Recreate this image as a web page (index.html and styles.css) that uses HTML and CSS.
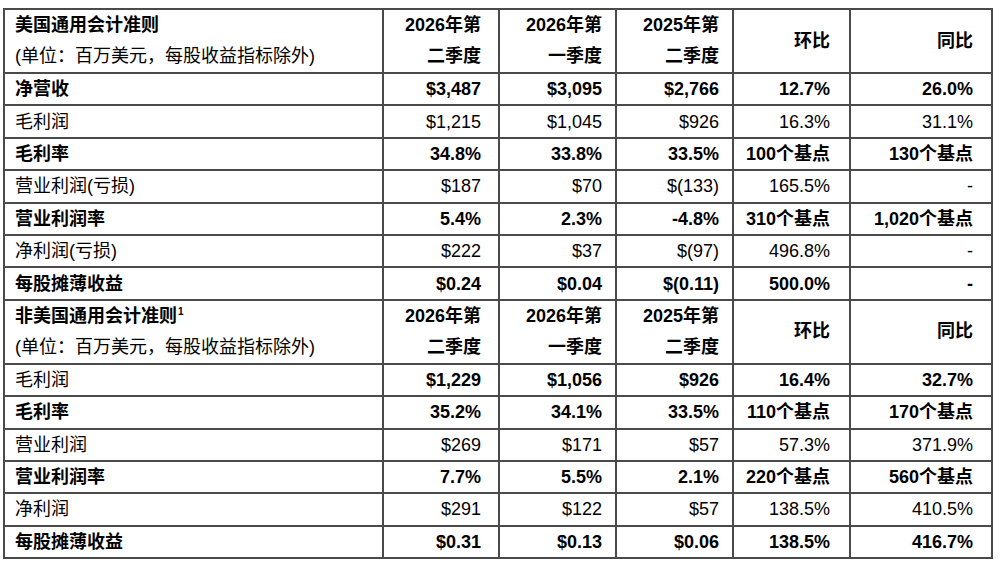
FILE: index.html
```html
<!DOCTYPE html>
<html lang="zh-CN">
<head>
<meta charset="utf-8">
<link rel="stylesheet" href="styles.css">
</head>
<body>
<table class="fin">
  <colgroup>
    <col class="c1"><col class="c2"><col class="c3"><col class="c4"><col class="c5"><col class="c6">
  </colgroup>
  <tbody>
    <tr class="head">
      <td class="label"><div class="b">美国通用会计准则</div><div>(单位：百万美元，每股收益指标除外)</div></td>
      <td class="b">2026年第<br>二季度</td>
      <td class="b">2026年第<br>一季度</td>
      <td class="b">2025年第<br>二季度</td>
      <td class="b">环比</td>
      <td class="b">同比</td>
    </tr>
    <tr class="bold"><td class="label">净营收</td><td>$3,487</td><td>$3,095</td><td>$2,766</td><td>12.7%</td><td>26.0%</td></tr>
    <tr><td class="label">毛利润</td><td>$1,215</td><td>$1,045</td><td>$926</td><td>16.3%</td><td>31.1%</td></tr>
    <tr class="bold"><td class="label">毛利率</td><td>34.8%</td><td>33.8%</td><td>33.5%</td><td>100个基点</td><td>130个基点</td></tr>
    <tr><td class="label">营业利润(亏损)</td><td>$187</td><td>$70</td><td>$(133)</td><td>165.5%</td><td>-</td></tr>
    <tr class="bold"><td class="label">营业利润率</td><td>5.4%</td><td>2.3%</td><td>-4.8%</td><td>310个基点</td><td>1,020个基点</td></tr>
    <tr><td class="label">净利润(亏损)</td><td>$222</td><td>$37</td><td>$(97)</td><td>496.8%</td><td>-</td></tr>
    <tr class="bold"><td class="label">每股摊薄收益</td><td>$0.24</td><td>$0.04</td><td>$(0.11)</td><td>500.0%</td><td>-</td></tr>
    <tr class="head">
      <td class="label"><div class="b">非美国通用会计准则<sup>1</sup></div><div>(单位：百万美元，每股收益指标除外)</div></td>
      <td class="b">2026年第<br>二季度</td>
      <td class="b">2026年第<br>一季度</td>
      <td class="b">2025年第<br>二季度</td>
      <td class="b">环比</td>
      <td class="b">同比</td>
    </tr>
    <tr class="bold"><td class="label reg">毛利润</td><td>$1,229</td><td>$1,056</td><td>$926</td><td>16.4%</td><td>32.7%</td></tr>
    <tr class="bold"><td class="label">毛利率</td><td>35.2%</td><td>34.1%</td><td>33.5%</td><td>110个基点</td><td>170个基点</td></tr>
    <tr><td class="label">营业利润</td><td>$269</td><td>$171</td><td>$57</td><td>57.3%</td><td>371.9%</td></tr>
    <tr class="bold"><td class="label">营业利润率</td><td>7.7%</td><td>5.5%</td><td>2.1%</td><td>220个基点</td><td>560个基点</td></tr>
    <tr><td class="label">净利润</td><td>$291</td><td>$122</td><td>$57</td><td>138.5%</td><td>410.5%</td></tr>
    <tr class="bold"><td class="label">每股摊薄收益</td><td>$0.31</td><td>$0.13</td><td>$0.06</td><td>138.5%</td><td>416.7%</td></tr>
  </tbody>
</table>
</body>
</html>
```

FILE: styles.css
```css
html, body {
  margin: 0;
  padding: 0;
  background: #ffffff;
}

body {
  padding: 8px 0 0 3px;
  font-family: "Liberation Sans", "Noto Sans CJK SC", sans-serif;
  font-size: 18px;
  color: #000;
}

.fin {
  border-collapse: collapse;
  table-layout: fixed;
  width: 990px;
}

.c1 { width: 379px; }
.c2 { width: 116px; }
.c3 { width: 117px; }
.c4 { width: 117px; }
.c5 { width: 117px; }
.c6 { width: 142px; }

.fin td {
  border: 2px solid #4a4a4a;
  height: 30.4px;
  padding: 0;
  text-align: right;
  vertical-align: middle;
  line-height: 22px;
  white-space: nowrap;
}

.fin td:nth-child(2) { padding-right: 17px; }
.fin td:nth-child(3) { padding-right: 13px; }
.fin td:nth-child(4) { padding-right: 13px; }
.fin td:nth-child(5) { padding-right: 19px; }
.fin td:nth-child(6) { padding-right: 18px; }

.fin td.label {
  text-align: left;
  padding-left: 10px;
}

.fin tr.head td {
  height: 60px;
  line-height: 31px;
}

.b,
.bold td {
  font-weight: 700;
}

.bold td.reg {
  font-weight: 400;
}

sup {
  font-size: 10px;
  line-height: 0;
  vertical-align: 7px;
  margin-left: 1px;
}
```
